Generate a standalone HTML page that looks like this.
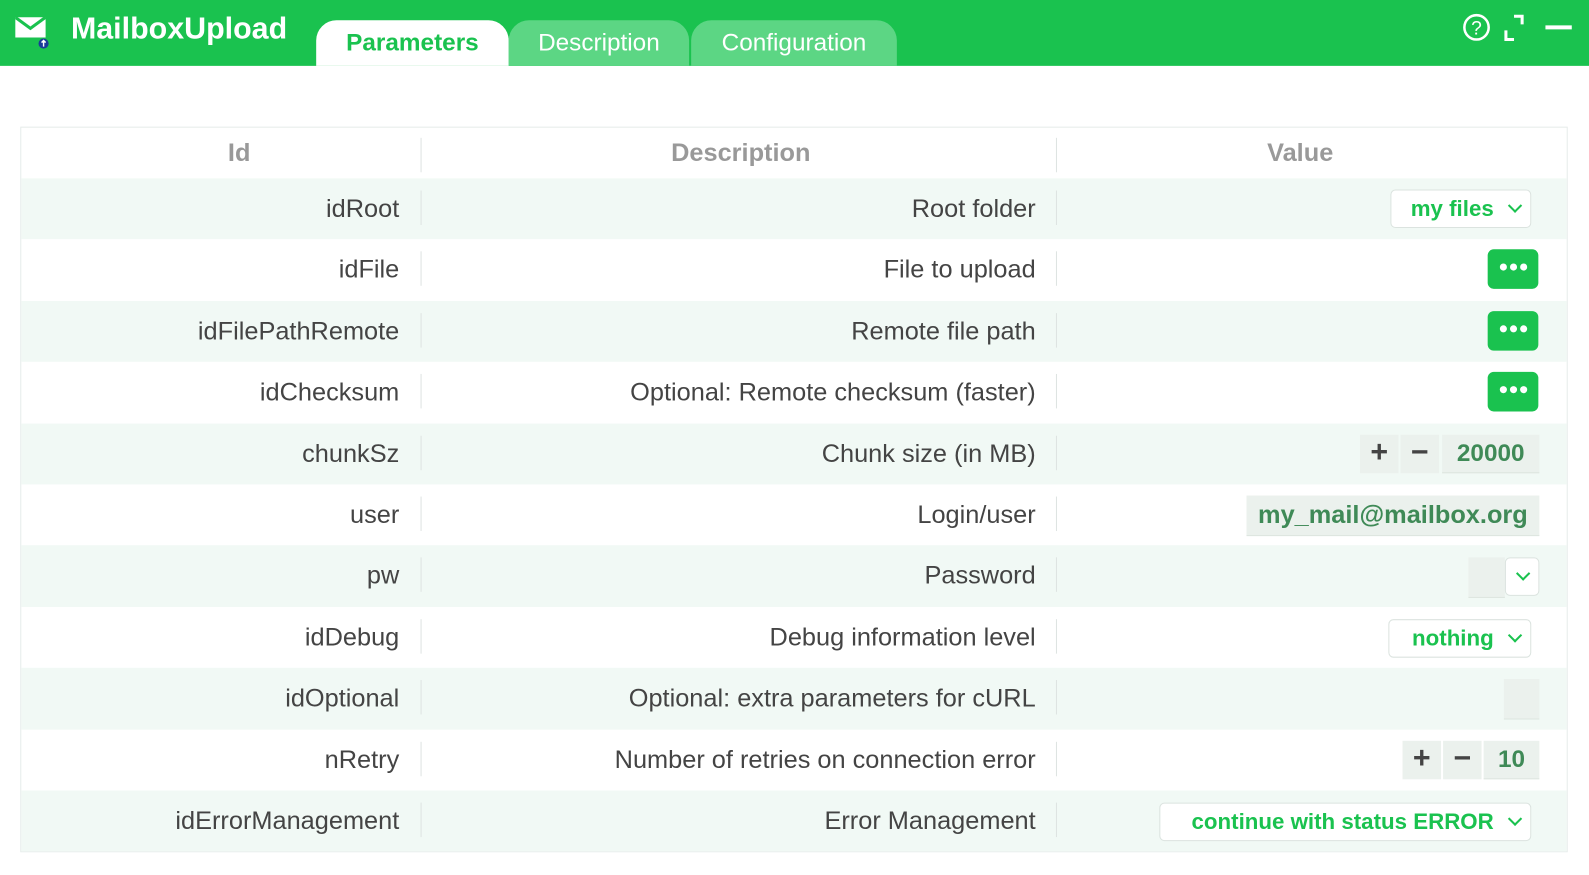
<!DOCTYPE html>
<html><head><meta charset="utf-8"><style>
*{margin:0;padding:0;box-sizing:border-box}
body{width:1589px;height:874px;background:#fff;font-family:"Liberation Sans","Noto Sans CJK JP",sans-serif;position:relative;overflow:hidden;color:#444}
#w{position:absolute;left:0;top:0;width:1568px;height:863px;transform:scale(1.0134);transform-origin:0 0}
.top{position:absolute;left:0;top:0;width:1568px;height:65px;background:#1ac24f}
.title{position:absolute;left:70px;top:12px;color:#fff;font-weight:bold;font-size:30px}
.tab{position:absolute;top:20px;height:45px;border-radius:20px 20px 0 0;font-size:24px;text-align:center;line-height:46px;color:#fff;background:#5cd684}
.tab.a{background:#fff;color:#1ac24f;font-weight:bold}
.tbl{position:absolute;left:20px;top:125px;width:1527px;height:716px;border:1px solid #e6ecea}
.row{position:absolute;left:0;width:1525px;height:60.4px;font-size:25px;color:#444}
.row.s{background:#f1f9f5}
.c1,.c2{position:absolute;text-align:right;line-height:60px;white-space:nowrap}
.c1{right:1152px}.c2{right:524px}
.sep{position:absolute;top:12px;width:1px;height:34px;background:#dde3e1}
.hd{font-weight:bold;color:#999;text-align:center;line-height:50px;position:absolute;top:0;font-size:25px}
.v{position:absolute;right:28px}
.sel{border:1px solid #dbe3df;border-radius:5px;background:#fff;color:#1ac24f;font-weight:bold;font-size:22px;height:38px;line-height:36px;padding:0 36px 0 0;text-align:right}
.chev{position:absolute;right:10px;top:10px;width:10px;height:10px;border-right:2px solid #1ac24f;border-bottom:2px solid #1ac24f;transform:rotate(45deg)}
.dots{width:50px;height:39px;background:#1ac24f;border-radius:6px}
.dots i{position:absolute;top:14px;width:7px;height:7px;border-radius:50%;background:#fff}
.gr{background:#ebf1ed;color:#3f8a57;font-weight:bold;border-bottom:1px solid #dde5df;height:38px;line-height:38px;position:absolute;top:0}
.pm{background:#ebf1ed;color:#444;font-weight:bold;height:38px;line-height:36px;text-align:center;font-size:30px;position:absolute;top:0;width:38px}
</style></head><body><div id="w">
<div class="top">
<svg style="position:absolute;left:15px;top:15px" width="34" height="34" viewBox="0 0 34 34"><path d="M0 2h30v20H0z" fill="#fff"/><path d="M0 2l15 11 15-11" fill="none" stroke="#1ac24f" stroke-width="3"/><circle cx="28" cy="28" r="5" fill="#1a3a9a"/><path d="M28 25v6M26 27l2-2 2 2" stroke="#fff" stroke-width="1.4" fill="none"/></svg>
<div class="title">MailboxUpload</div>
<div class="tab a" style="left:312px;width:190px">Parameters</div>
<div class="tab" style="left:502px;width:178px">Description</div>
<div class="tab" style="left:682px;width:203px">Configuration</div>
<svg style="position:absolute;left:1440px;top:12px" width="120" height="30" viewBox="0 0 120 30"><circle cx="17" cy="15" r="12" fill="none" stroke="#fff" stroke-width="2.5"/><text x="17" y="22" font-size="19" font-family="Liberation Sans" fill="#fff" text-anchor="middle">?</text><path d="M46 18v9h8M54 4h8v8" fill="none" stroke="#fff" stroke-width="3"/><path d="M85 15h26" stroke="#fff" stroke-width="4"/></svg>
</div>
<div class="tbl">
<div class="hd" style="left:0;width:430px">Id</div>
<div class="hd" style="left:394px;width:632px">Description</div>
<div class="hd" style="left:1022px;width:480px">Value</div>
<div class="sep" style="left:394px;top:10px"></div><div class="sep" style="left:1021px;top:10px"></div>

<div class="row s" style="top:50px"><div class="c1">idRoot</div><div class="sep" style="left:394px"></div><div class="c2">Root folder</div><div class="sep" style="left:1021px"></div><div class="v sel" style="top:11px;width:139px;right:35px">my files<span class="chev"></span></div></div>
<div class="row" style="top:110.4px"><div class="c1">idFile</div><div class="sep" style="left:394px"></div><div class="c2">File to upload</div><div class="sep" style="left:1021px"></div><div class="v dots" style="top:10px"><i style="left:12px"></i><i style="left:22px"></i><i style="left:32px"></i></div></div>
<div class="row s" style="top:170.8px"><div class="c1">idFilePathRemote</div><div class="sep" style="left:394px"></div><div class="c2">Remote file path</div><div class="sep" style="left:1021px"></div><div class="v dots" style="top:10px"><i style="left:12px"></i><i style="left:22px"></i><i style="left:32px"></i></div></div>
<div class="row" style="top:231.2px"><div class="c1">idChecksum</div><div class="sep" style="left:394px"></div><div class="c2">Optional: Remote checksum (faster)</div><div class="sep" style="left:1021px"></div><div class="v dots" style="top:10px"><i style="left:12px"></i><i style="left:22px"></i><i style="left:32px"></i></div></div>
<div class="row s" style="top:291.6px"><div class="c1">chunkSz</div><div class="sep" style="left:394px"></div><div class="c2">Chunk size (in MB)</div><div class="sep" style="left:1021px"></div>
<div class="pm" style="left:1321px;top:11px">+</div><div class="pm" style="left:1361px;top:11px">−</div><div class="gr" style="left:1402px;width:96px;top:11px;text-align:center;font-size:24px">20000</div></div>
<div class="row" style="top:352px"><div class="c1">user</div><div class="sep" style="left:394px"></div><div class="c2">Login/user</div><div class="sep" style="left:1021px"></div><div class="gr" style="left:1209px;width:289px;top:11px;height:40px;text-align:center;font-size:25px">my_mail@mailbox.org</div></div>
<div class="row s" style="top:412.4px"><div class="c1">pw</div><div class="sep" style="left:394px"></div><div class="c2">Password</div><div class="sep" style="left:1021px"></div><div class="gr" style="left:1428px;width:36px;top:12px;height:40px"></div><div class="v sel" style="top:12px;width:34px;height:38px;right:27px;padding:0"><span class="chev" style="right:10px"></span></div></div>
<div class="row" style="top:472.8px"><div class="c1">idDebug</div><div class="sep" style="left:394px"></div><div class="c2">Debug information level</div><div class="sep" style="left:1021px"></div><div class="v sel" style="top:12px;width:141px;right:35px">nothing<span class="chev"></span></div></div>
<div class="row s" style="top:533.2px"><div class="c1">idOptional</div><div class="sep" style="left:394px"></div><div class="c2">Optional: extra parameters for cURL</div><div class="sep" style="left:1021px"></div><div class="gr" style="left:1463px;width:35px;top:11px;height:40px"></div></div>
<div class="row" style="top:593.6px"><div class="c1">nRetry</div><div class="sep" style="left:394px"></div><div class="c2">Number of retries on connection error</div><div class="sep" style="left:1021px"></div>
<div class="pm" style="left:1363px;top:11px">+</div><div class="pm" style="left:1403px;top:11px">−</div><div class="gr" style="left:1443px;width:55px;top:11px;text-align:center;font-size:24px">10</div></div>
<div class="row s" style="top:654px"><div class="c1">idErrorManagement</div><div class="sep" style="left:394px"></div><div class="c2">Error Management</div><div class="sep" style="left:1021px"></div><div class="v sel" style="top:12px;width:367px;right:35px">continue with status ERROR<span class="chev"></span></div></div>
</div>
</div></body></html>
